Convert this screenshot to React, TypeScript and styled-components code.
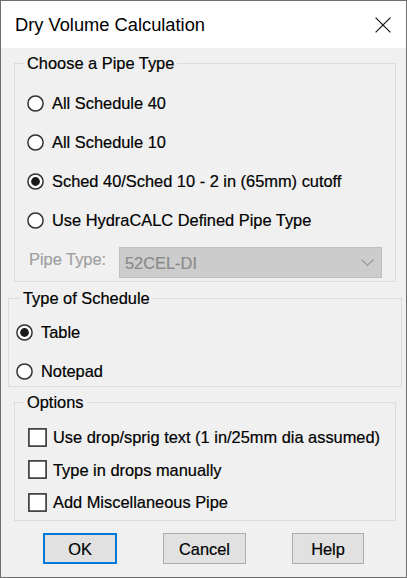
import React from "react";
import styled, { createGlobalStyle } from "styled-components";

const Global = createGlobalStyle`
  html, body { margin: 0; padding: 0; background: #ffffff; }
  * { box-sizing: border-box; }
`;

const FONT = `"Liberation Sans", Arial, sans-serif`;

const Window = styled.div`
  width: 407px;
  height: 578px;
  border: 1px solid #6f6f6f;
  background: #f0f0f0;
  display: flex;
  flex-direction: column;
  font-family: ${FONT};
  font-size: 16.4px;
  color: #000;
  -webkit-text-stroke: 0.2px currentColor;
`;

const TitleBar = styled.div`
  height: 47px;
  flex: none;
  background: #ffffff;
  display: flex;
  align-items: center;
  justify-content: space-between;
  padding: 0 15px 0 14px;
`;

const Title = styled.div`
  font-size: 18.3px;
  line-height: 22px;
  color: #000;
  -webkit-text-stroke: 0;
`;

const CloseBox = styled.div`
  width: 16px;
  height: 16px;
  display: flex;
  margin-top: 1px;
`;

const Client = styled.div`
  display: flex;
  flex-direction: column;
  flex: 1;
`;

const Group = styled.div<{ $top: number; $left: number; $width: number; $pt: number; $pb: number }>`
  position: relative;
  margin-top: ${(p) => p.$top}px;
  margin-left: ${(p) => p.$left}px;
  width: ${(p) => p.$width}px;
  border: 1px solid #dcdcdc;
  padding: ${(p) => p.$pt}px 0 ${(p) => p.$pb}px 0;
  display: flex;
  flex-direction: column;
`;

const Legend = styled.div<{ $inset: number }>`
  position: absolute;
  top: -11px;
  left: ${(p) => p.$inset}px;
  padding: 0 3px;
  line-height: 20px;
  background: #f0f0f0;
`;

const OptionList = styled.div<{ $gap: number; $indent: number }>`
  display: flex;
  flex-direction: column;
  gap: ${(p) => p.$gap}px;
  padding-left: ${(p) => p.$indent}px;
`;

const OptionRow = styled.label<{ $gap: number }>`
  height: 30px;
  display: flex;
  align-items: center;
  gap: ${(p) => p.$gap}px;
  line-height: 20px;
  white-space: nowrap;
`;

const Mark = styled.svg`
  flex: none;
  display: block;
`;

const PipeRow = styled.div`
  display: flex;
  align-items: center;
  margin-top: 12px;
  padding-left: 14px;
`;

const PipeLabel = styled.div`
  width: 90px;
  color: #a0a0a0;
  line-height: 20px;
  margin-bottom: 8px;
`;

const Combo = styled.div`
  width: 263px;
  height: 31px;
  background: #cccccc;
  border: 1px solid #bfbfbf;
  display: flex;
  align-items: center;
  justify-content: space-between;
  padding: 0 7px 0 5px;
  color: #8a8a8a;
  line-height: 20px;
`;

const ButtonRow = styled.div`
  display: flex;
  margin-top: 12px;
  padding-left: 42px;
  gap: 46px;
`;

const Button = styled.button<{ $w: number; $default?: boolean }>`
  width: ${(p) => p.$w}px;
  height: 31px;
  background: #e1e1e1;
  border: ${(p) => (p.$default ? "2px solid #0078d7" : "1px solid #adadad")};
  font-family: ${FONT};
  font-size: 16.4px;
  color: #000;
  padding: 0;
  line-height: 20px;
  -webkit-text-stroke: 0.2px currentColor;
`;

function Radio({ checked }: { checked?: boolean }) {
  return (
    <Mark width="17" height="17" viewBox="0 0 17 17">
      <circle cx="8.5" cy="8.5" r="7.6" fill="#fff" stroke="#333" strokeWidth="1.5" />
      {checked && <circle cx="8.5" cy="8.5" r="4.4" fill="#1a1a1a" />}
    </Mark>
  );
}

function Check() {
  return (
    <Mark width="19" height="19" viewBox="0 0 19 19">
      <rect x="0.9" y="0.9" width="17.2" height="17.2" fill="#fff" stroke="#333" strokeWidth="1.6" />
    </Mark>
  );
}

export default function App() {
  return (
    <>
      <Global />
      <Window>
        <TitleBar>
          <Title>Dry Volume Calculation</Title>
          <CloseBox>
            <svg width="16" height="16" viewBox="0 0 16 16">
              <path d="M0.6 0.6 L15.4 15.4 M15.4 0.6 L0.6 15.4" stroke="#1a1a1a" strokeWidth="1.3" fill="none" />
            </svg>
          </CloseBox>
        </TitleBar>
        <Client>
          <Group $top={15} $left={13} $width={382} $pt={24} $pb={3}>
            <Legend $inset={9}>Choose a Pipe Type</Legend>
            <OptionList $gap={9} $indent={12}>
              <OptionRow $gap={8}><Radio />All Schedule 40</OptionRow>
              <OptionRow $gap={8}><Radio />All Schedule 10</OptionRow>
              <OptionRow $gap={8}><Radio checked />Sched 40/Sched 10 - 2 in (65mm) cutoff</OptionRow>
              <OptionRow $gap={8}><Radio />Use HydraCALC Defined Pipe Type</OptionRow>
            </OptionList>
            <PipeRow>
              <PipeLabel>Pipe Type:</PipeLabel>
              <Combo>
                <span>52CEL-DI</span>
                <svg width="13" height="7" viewBox="0 0 13 7">
                  <path d="M0.5 0.5 L6.5 6.3 L12.5 0.5" stroke="#9a9a9a" strokeWidth="1.2" fill="none" />
                </svg>
              </Combo>
            </PipeRow>
          </Group>
          <Group $top={16} $left={7} $width={394} $pt={18} $pb={0}>
            <Legend $inset={11}>Type of Schedule</Legend>
            <OptionList $gap={9} $indent={7}>
              <OptionRow $gap={8}><Radio checked />Table</OptionRow>
              <OptionRow $gap={8}><Radio />Notepad</OptionRow>
            </OptionList>
          </Group>
          <Group $top={15} $left={13} $width={382} $pt={19} $pb={3}>
            <Legend $inset={9}>Options</Legend>
            <OptionList $gap={2.5} $indent={13}>
              <OptionRow $gap={6}><Check />Use drop/sprig text (1 in/25mm dia assumed)</OptionRow>
              <OptionRow $gap={6}><Check />Type in drops manually</OptionRow>
              <OptionRow $gap={6}><Check />Add Miscellaneous Pipe</OptionRow>
            </OptionList>
          </Group>
          <ButtonRow>
            <Button $w={74} $default>OK</Button>
            <Button $w={83}>Cancel</Button>
            <Button $w={72}>Help</Button>
          </ButtonRow>
        </Client>
      </Window>
    </>
  );
}
